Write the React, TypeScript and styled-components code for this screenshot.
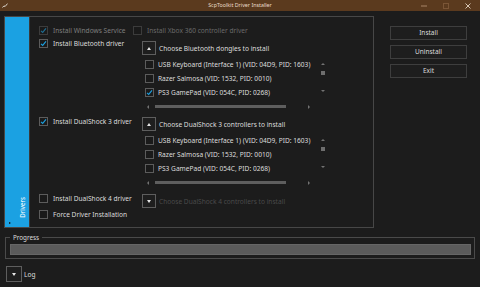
import React from "react";
import styled, { createGlobalStyle, css } from "styled-components";

const GlobalStyle = createGlobalStyle`
  html, body { margin: 0; padding: 0; background: #1c1c1c; overflow: hidden; }
  body { font-family: "Noto Sans", "Open Sans", sans-serif; }
  #root { width: 480px; height: 287px; }
  * { box-sizing: border-box; }
`;

const BLUE = "#1ba1e2";

const Window = styled.div`
  width: 480px;
  height: 287px;
  background: #1c1c1c;
  display: flex;
  flex-direction: column;
  color: #dcdcdc;
  font-size: 6.6px;
  line-height: 9px;
`;

const TitleBar = styled.div`
  height: 11px;
  flex-shrink: 0;
  background: #5b3a1e;
  display: grid;
  grid-template-columns: 1fr auto 1fr;
  align-items: center;
`;

const TitleLeft = styled.div`
  display: flex;
  align-items: center;
  padding-left: 2px;
`;

const TitleText = styled.div`
  font-size: 5.3px;
  line-height: 11px;
  color: #eadccc;
`;

const WinControls = styled.div`
  display: flex;
  justify-content: flex-end;
  padding-right: 1px;
`;

const WinCtl = styled.div`
  width: 22px;
  height: 11px;
  display: flex;
  align-items: center;
  justify-content: center;
`;

const Body = styled.div`
  flex: 1;
  display: flex;
  flex-direction: column;
  padding: 5px 6px 0 4px;
`;

const TopRow = styled.div`
  display: flex;
  align-items: flex-start;
`;

const DriversPanel = styled.div`
  width: 370px;
  height: 212px;
  border: 1px solid #474747;
  display: flex;
`;

const SideTab = styled.div`
  width: 25px;
  background: ${BLUE};
  border-right: 1px solid #3a3a3a;
  display: flex;
  flex-direction: column;
  justify-content: flex-end;
`;

const TabLabel = styled.div`
  align-self: flex-end;
  margin-right: 3px;
  writing-mode: vertical-rl;
  transform: rotate(180deg);
  font-size: 6.2px;
  line-height: 7px;
  color: #ffffff;
`;

const TabGrip = styled.div`
  width: 0;
  height: 0;
  margin: 4px 0 3px 4px;
  border-top: 1.5px solid transparent;
  border-bottom: 1.5px solid transparent;
  border-left: 2px solid #0a0a0a;
`;

const Content = styled.div`
  flex: 1;
  display: flex;
  flex-direction: column;
  padding: 9px 0 0 9px;
`;

const FlatRow = styled.div`
  display: flex;
  align-items: center;
`;

const GridRow = styled.div<{ $top: number }>`
  display: grid;
  grid-template-columns: 103px 1fr;
  align-items: start;
  margin-top: ${(p) => p.$top}px;
`;

const CheckItem = styled.div<{ $width?: number; $gap?: number; $tone?: "normal" | "dim" | "faint" }>`
  display: flex;
  align-items: center;
  height: 9px;
  gap: ${(p) => p.$gap ?? 5}px;
  white-space: nowrap;
  ${(p) => (p.$width ? `width: ${p.$width}px;` : "")}
  color: ${(p) => (p.$tone === "dim" ? "#7e7e7e" : p.$tone === "faint" ? "#6a6a6a" : "#dcdcdc")};
`;

const Box = styled.span<{ $disabled?: boolean }>`
  width: 9px;
  height: 9px;
  flex-shrink: 0;
  border: 1px solid ${(p) => (p.$disabled ? "#3c3c3c" : "#5c5c5c")};
  background: #1a1a1a;
  display: flex;
  align-items: center;
  justify-content: center;
`;

const Check: React.FC<{ checked?: boolean; disabled?: boolean }> = ({ checked, disabled }) => (
  <Box $disabled={disabled}>
    {checked && (
      <svg width="7" height="7" viewBox="0 0 7 7">
        <path
          d="M1 3.8 L2.7 5.4 L6 1.4"
          fill="none"
          stroke={disabled ? "#1f6f94" : BLUE}
          strokeWidth="1.1"
        />
      </svg>
    )}
  </Box>
);

type Dir = "up" | "down" | "left" | "right";

const Tri = styled.span<{ $dir: Dir; $color?: string; $w?: number; $h?: number }>`
  width: 0;
  height: 0;
  flex-shrink: 0;
  ${({ $dir, $color = "#e6e6e6", $w = 5, $h = 3 }) => {
    const half = $w / 2;
    switch ($dir) {
      case "up":
        return css`
          border-left: ${half}px solid transparent;
          border-right: ${half}px solid transparent;
          border-bottom: ${$h}px solid ${$color};
        `;
      case "down":
        return css`
          border-left: ${half}px solid transparent;
          border-right: ${half}px solid transparent;
          border-top: ${$h}px solid ${$color};
        `;
      case "left":
        return css`
          border-top: ${half}px solid transparent;
          border-bottom: ${half}px solid transparent;
          border-right: ${$h}px solid ${$color};
        `;
      default:
        return css`
          border-top: ${half}px solid transparent;
          border-bottom: ${half}px solid transparent;
          border-left: ${$h}px solid ${$color};
        `;
    }
  }}
`;

const Expander = styled.div<{ $top?: number }>`
  display: flex;
  flex-direction: column;
  width: 185px;
  margin-top: ${(p) => p.$top ?? 0}px;
`;

const ExpHeader = styled.div<{ $disabled?: boolean }>`
  display: flex;
  align-items: center;
  height: 14px;
  gap: 3px;
  white-space: nowrap;
  color: ${(p) => (p.$disabled ? "#4a4a4a" : "#dcdcdc")};
`;

const ExpButton = styled.span<{ $size?: number }>`
  width: ${(p) => p.$size ?? 14}px;
  height: ${(p) => p.$size ?? 14}px;
  flex-shrink: 0;
  border: 1px solid #5e5e5e;
  background: #1e1e1e;
  display: flex;
  align-items: center;
  justify-content: center;
`;

const ListArea = styled.div`
  display: flex;
  height: 42px;
  margin-top: 2px;
`;

const Items = styled.div`
  width: 177px;
  padding-left: 3px;
  display: flex;
  flex-direction: column;
`;

const ListRow = styled.div`
  height: 14px;
  display: flex;
  align-items: center;
`;

const VScroll = styled.div`
  width: 7px;
  display: flex;
  flex-direction: column;
  align-items: center;
  padding-top: 6px;
`;

const VThumb = styled.span`
  width: 4px;
  height: 4px;
  margin-top: 6px;
  background: #6e6e6e;
`;

const VSpacer = styled.span`
  height: 15px;
`;

const HScroll = styled.div`
  width: 168px;
  height: 9px;
  margin-top: 3px;
  padding-left: 5px;
  display: flex;
  align-items: center;
`;

const HThumb = styled.span`
  width: 131px;
  height: 3px;
  margin-left: 6px;
  background: #5e5e5e;
`;

const HEnd = styled.span`
  margin-left: auto;
  display: flex;
`;

const ActionColumn = styled.div`
  margin-left: 16px;
  padding-top: 10px;
  display: flex;
  flex-direction: column;
  gap: 5px;
`;

const ActionButton = styled.button`
  width: 77px;
  height: 14px;
  padding: 0;
  border: 1px solid #3e3e3e;
  background: #1e1e1e;
  color: #dcdcdc;
  font-family: inherit;
  font-size: 6.5px;
  line-height: 12px;
`;

const ProgressGroup = styled.div`
  position: relative;
  margin: 9px 0 0 1px;
  width: 470px;
  height: 22px;
  border: 1px solid #4a4a4a;
  padding: 6px 3px 3px 4px;
`;

const GroupLabel = styled.span`
  position: absolute;
  left: 4px;
  top: -5px;
  padding: 0 3px;
  background: #1c1c1c;
  font-size: 6.3px;
  line-height: 9px;
  color: #dcdcdc;
`;

const ProgressTrack = styled.div`
  width: 461px;
  height: 11px;
  background: #5b5b5b;
  border: 1px solid #666666;
`;

const LogRow = styled.div`
  margin: 7px 0 0 2px;
  display: flex;
  align-items: center;
  gap: 2px;
`;

const LogLabel = styled.span`
  color: #dcdcdc;
`;

const devices = [
  "USB Keyboard (Interface 1) (VID: 04D9, PID: 1603)",
  "Razer Salmosa (VID: 1532, PID: 0010)",
  "PS3 GamePad (VID: 054C, PID: 0268)",
];

const DeviceList: React.FC<{ checked: boolean[] }> = ({ checked }) => (
  <>
    <ListArea>
      <Items>
        {devices.map((d, i) => (
          <ListRow key={d}>
            <CheckItem $gap={4}>
              <Check checked={checked[i]} />
              <span>{d}</span>
            </CheckItem>
          </ListRow>
        ))}
      </Items>
      <VScroll>
        <Tri $dir="up" $color="#727272" $w={4} $h={2.5} />
        <VThumb />
        <VSpacer />
        <Tri $dir="down" $color="#727272" $w={4} $h={2.5} />
      </VScroll>
    </ListArea>
    <HScroll>
      <Tri $dir="left" $color="#727272" $w={4} $h={2.5} />
      <HThumb />
      <HEnd>
        <Tri $dir="right" $color="#727272" $w={4} $h={2.5} />
      </HEnd>
    </HScroll>
  </>
);

export default function App() {
  return (
    <>
      <GlobalStyle />
      <Window>
        <TitleBar>
          <TitleLeft>
            <svg width="6" height="5" viewBox="0 0 6 5">
              <path d="M0.5 4.5 L2 2.8 L3 3.6 L5.5 0.6" fill="none" stroke="#d8d0c8" strokeWidth="1" />
            </svg>
          </TitleLeft>
          <TitleText>ScpToolkit Driver Installer</TitleText>
          <WinControls>
            <WinCtl>
              <svg width="6" height="6" viewBox="0 0 6 6">
                <line x1="0" y1="3" x2="6" y2="3" stroke="#a88466" strokeWidth="1" />
              </svg>
            </WinCtl>
            <WinCtl>
              <svg width="6" height="6" viewBox="0 0 6 6">
                <rect x="0.5" y="0.5" width="5" height="5" fill="none" stroke="#7a5536" strokeWidth="1" />
              </svg>
            </WinCtl>
            <WinCtl>
              <svg width="6" height="6" viewBox="0 0 6 6">
                <path d="M0.5 0.5 L5.5 5.5 M5.5 0.5 L0.5 5.5" stroke="#d6c4b2" strokeWidth="1" />
              </svg>
            </WinCtl>
          </WinControls>
        </TitleBar>
        <Body>
          <TopRow>
            <DriversPanel>
              <SideTab>
                <TabLabel>Drivers</TabLabel>
                <TabGrip />
              </SideTab>
              <Content>
                <FlatRow>
                  <CheckItem $width={94} $tone="dim">
                    <Check checked disabled />
                    <span>Install Windows Service</span>
                  </CheckItem>
                  <CheckItem $tone="faint">
                    <Check disabled />
                    <span>Install Xbox 360 controller driver</span>
                  </CheckItem>
                </FlatRow>
                <GridRow $top={4}>
                  <CheckItem>
                    <Check checked />
                    <span>Install Bluetooth driver</span>
                  </CheckItem>
                  <Expander $top={2}>
                    <ExpHeader>
                      <ExpButton>
                        <Tri $dir="up" />
                      </ExpButton>
                      <span>Choose Bluetooth dongles to install</span>
                    </ExpHeader>
                    <DeviceList checked={[false, false, true]} />
                  </Expander>
                </GridRow>
                <GridRow $top={6}>
                  <CheckItem>
                    <Check checked />
                    <span>Install DualShock 3 driver</span>
                  </CheckItem>
                  <Expander>
                    <ExpHeader>
                      <ExpButton>
                        <Tri $dir="up" />
                      </ExpButton>
                      <span>Choose DualShock 3 controllers to install</span>
                    </ExpHeader>
                    <DeviceList checked={[false, false, false]} />
                  </Expander>
                </GridRow>
                <GridRow $top={7}>
                  <CheckItem>
                    <Check />
                    <span>Install DualShock 4 driver</span>
                  </CheckItem>
                  <Expander>
                    <ExpHeader $disabled>
                      <ExpButton>
                        <Tri $dir="down" />
                      </ExpButton>
                      <span>Choose DualShock 4 controllers to install</span>
                    </ExpHeader>
                  </Expander>
                </GridRow>
                <GridRow $top={2}>
                  <CheckItem>
                    <Check />
                    <span>Force Driver Installation</span>
                  </CheckItem>
                </GridRow>
              </Content>
            </DriversPanel>
            <ActionColumn>
              <ActionButton>Install</ActionButton>
              <ActionButton>Uninstall</ActionButton>
              <ActionButton>Exit</ActionButton>
            </ActionColumn>
          </TopRow>
          <ProgressGroup>
            <GroupLabel>Progress</GroupLabel>
            <ProgressTrack />
          </ProgressGroup>
          <LogRow>
            <ExpButton $size={16}>
              <Tri $dir="down" />
            </ExpButton>
            <LogLabel>Log</LogLabel>
          </LogRow>
        </Body>
      </Window>
    </>
  );
}
